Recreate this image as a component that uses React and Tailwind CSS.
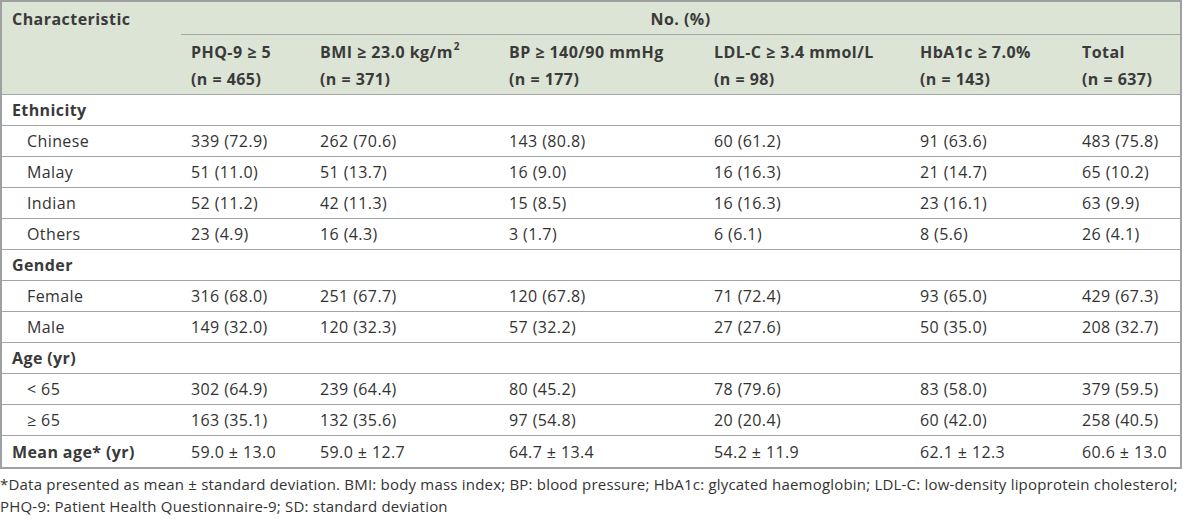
import React from 'react';

const cols = 'grid grid-cols-[179px_129px_189px_205px_206px_162px_1fr]';

const heads = [
  ['PHQ-9 ≥ 5', '(n = 465)'],
  [<>BMI ≥ 23.0 kg/m<span className="inline-block text-[10px] leading-none align-top mt-[2px] ml-[1px]">2</span></>, '(n = 371)'],
  ['BP ≥ 140/90 mmHg', '(n = 177)'],
  ['LDL-C ≥ 3.4 mmol/L', '(n = 98)'],
  ['HbA1c ≥ 7.0%', '(n = 143)'],
  ['Total', '(n = 637)']
];

const rows = [
  { label: 'Ethnicity', group: true },
  { label: 'Chinese', vals: ['339 (72.9)', '262 (70.6)', '143 (80.8)', '60 (61.2)', '91 (63.6)', '483 (75.8)'] },
  { label: 'Malay', vals: ['51 (11.0)', '51 (13.7)', '16 (9.0)', '16 (16.3)', '21 (14.7)', '65 (10.2)'] },
  { label: 'Indian', vals: ['52 (11.2)', '42 (11.3)', '15 (8.5)', '16 (16.3)', '23 (16.1)', '63 (9.9)'] },
  { label: 'Others', vals: ['23 (4.9)', '16 (4.3)', '3 (1.7)', '6 (6.1)', '8 (5.6)', '26 (4.1)'] },
  { label: 'Gender', group: true },
  { label: 'Female', vals: ['316 (68.0)', '251 (67.7)', '120 (67.8)', '71 (72.4)', '93 (65.0)', '429 (67.3)'] },
  { label: 'Male', vals: ['149 (32.0)', '120 (32.3)', '57 (32.2)', '27 (27.6)', '50 (35.0)', '208 (32.7)'] },
  { label: 'Age (yr)', group: true },
  { label: '< 65', vals: ['302 (64.9)', '239 (64.4)', '80 (45.2)', '78 (79.6)', '83 (58.0)', '379 (59.5)'] },
  { label: '≥ 65', vals: ['163 (35.1)', '132 (35.6)', '97 (54.8)', '20 (20.4)', '60 (42.0)', '258 (40.5)'] },
  { label: 'Mean age* (yr)', bold: true, vals: ['59.0 ± 13.0', '59.0 ± 12.7', '64.7 ± 13.4', '54.2 ± 11.9', '62.1 ± 12.3', '60.6 ± 13.0'] }
];

export default function App() {
  return (
    <div className="w-[1183px] bg-white text-[#333] font-['Open_Sans',sans-serif]">
      <div className="w-[1182px] border-2 border-[#9ea0a2]">
        {/* header */}
        <div className="flex bg-[#dce4d5] border-b border-[#a3a5a6] text-[16px] font-bold tracking-[0.45px] text-[#3a3a3a]">
          <div className="w-[179px] pl-[10px] pt-[1px] leading-[32px]">Characteristic</div>
          <div className="flex-1 flex flex-col">
            <div className="h-[33px] pt-[1px] border-b border-[#a3a5a6] flex items-center justify-center">No. (%)</div>
            <div className="h-[59px] pt-[4px] grid grid-cols-[129px_189px_205px_206px_162px_1fr] leading-[27px]">
              {heads.map((h, i) => (
                <div key={i} className="pl-[10px] whitespace-nowrap">
                  <div className="h-[27px]">{h[0]}</div>
                  <div className="h-[27px]">{h[1]}</div>
                </div>
              ))}
            </div>
          </div>
        </div>
        {/* body */}
        {rows.map((r, i) => (
          <div
            key={i}
            className={`${cols} h-[31px] items-center text-[16px] tracking-[0.4px] ${i < rows.length - 1 ? 'border-b border-[#a3a5a6]' : ''}`}
          >
            <div className={r.group || r.bold ? 'pl-[10px] font-bold text-[#3a3a3a]' : 'pl-[25px]'}>{r.label}</div>
            {r.vals && r.vals.map((v, j) => (
              <div key={j} className="pl-[10px]">{v}</div>
            ))}
          </div>
        ))}
      </div>
      <div className="pt-[4px] text-[15px] leading-[22px] tracking-[0.2px] whitespace-nowrap">
        <p>*Data presented as mean ± standard deviation. BMI: body mass index; BP: blood pressure; HbA1c: glycated haemoglobin; LDL-C: low-density lipoprotein cholesterol;</p>
        <p>PHQ-9: Patient Health Questionnaire-9; SD: standard deviation</p>
      </div>
    </div>
  );
}
